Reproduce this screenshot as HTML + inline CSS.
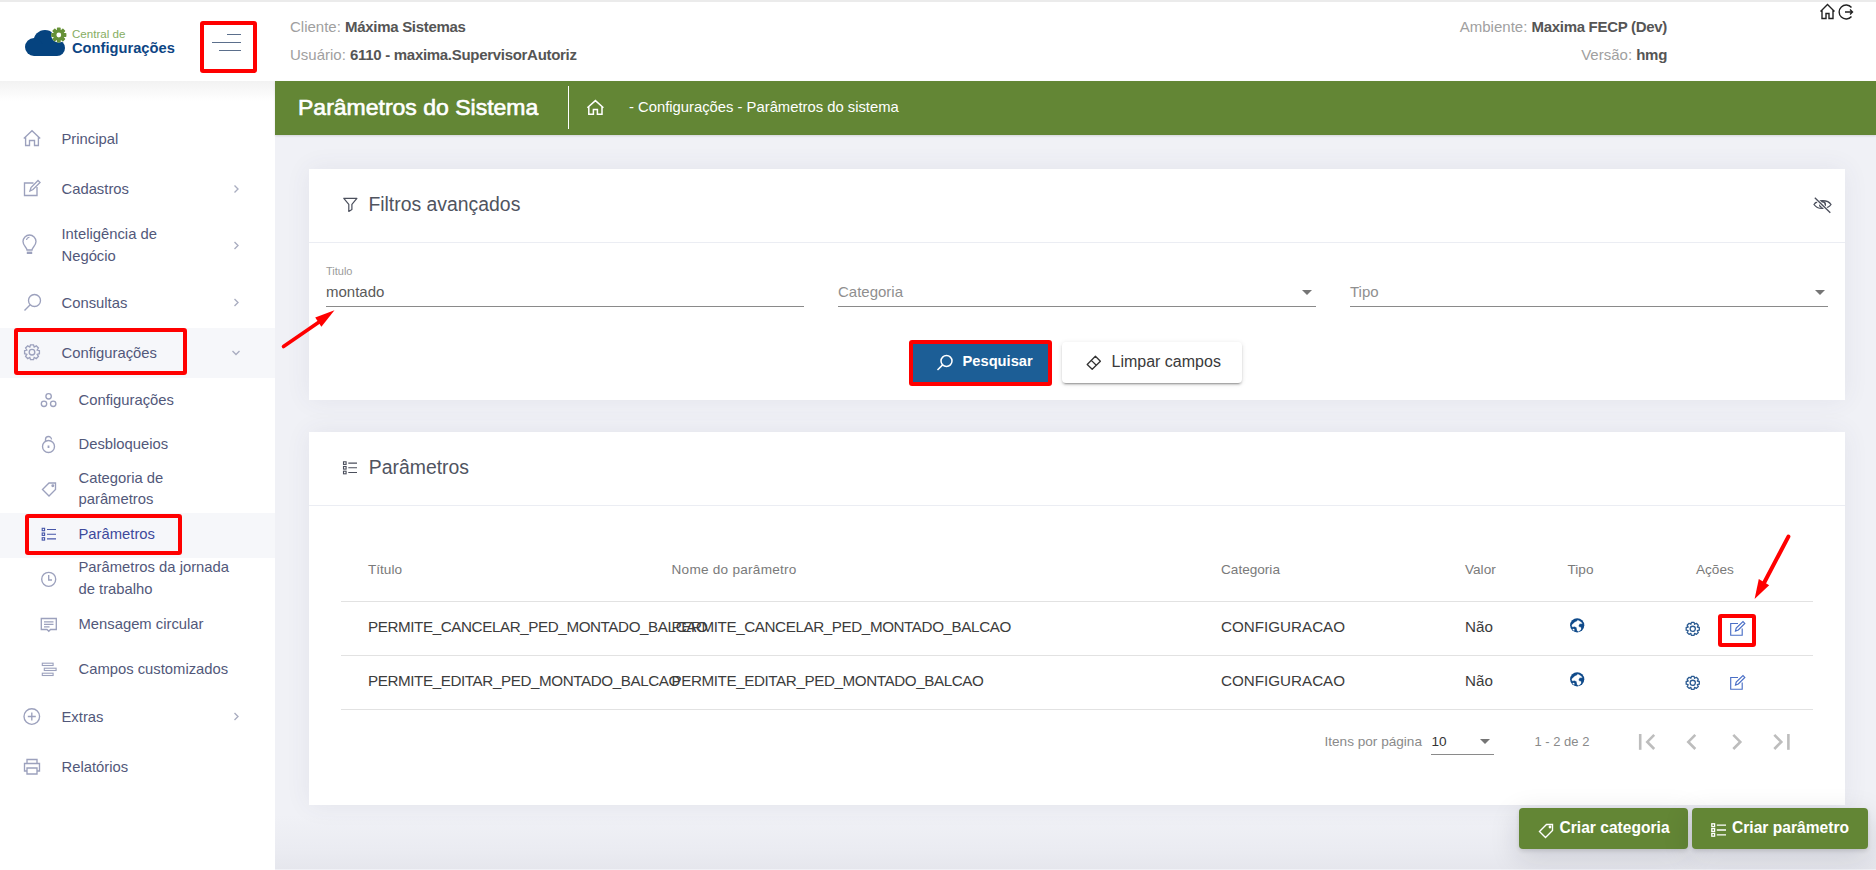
<!DOCTYPE html>
<html><head><meta charset="utf-8">
<style>
*{margin:0;padding:0;box-sizing:border-box}
html,body{width:1876px;height:870px;overflow:hidden;background:#f0f1f6;font-family:"Liberation Sans",sans-serif}
.a{position:absolute}
.t{position:absolute;white-space:nowrap;line-height:1}
svg{position:absolute;overflow:visible}
#topline{left:0;top:0;width:1876px;height:2px;background:#ebebeb}
#header{left:0;top:2px;width:1876px;height:79px;background:#fff}
#sidebar{left:0;top:81px;width:275px;height:789px;background:#fff}
#sbshadow{left:0;top:81px;width:275px;height:20px;background:linear-gradient(#f2f2f2,rgba(255,255,255,0))}
#green{left:275px;top:81px;width:1601px;height:54px;background:#638635;box-shadow:0 1px 2px rgba(0,0,0,.12)}
.card{position:absolute;background:#fff;box-shadow:0 0 24px 0 rgba(70,72,110,.075)}
.redbox{position:absolute;border:4px solid #ff0000;border-radius:3px}
.hl{color:#a0a0a0}
.hv{color:#555;font-weight:bold;letter-spacing:-.3px}
.sb{color:#52587a;font-size:14.8px;margin-top:.8px}
.si{stroke:#9ca1bd;fill:none;stroke-width:1.35}
</style></head><body>
<div id="topline" class="a"></div>
<div id="header" class="a"></div>
<div id="sidebar" class="a"></div>
<div id="sbshadow" class="a"></div>
<div id="green" class="a"></div>
<div class="a" style="left:275px;top:815px;width:1601px;height:54px;background:linear-gradient(rgba(228,229,236,0),rgba(228,229,236,.45) 65%,rgba(226,227,234,.75))"></div>

<!-- header content -->
<div class="t" style="left:290px;top:19px;font-size:15px"><span class="hl">Cliente: </span><span class="hv">Máxima Sistemas</span></div>
<div class="t" style="left:290px;top:47px;font-size:15px"><span class="hl">Usuário: </span><span class="hv">6110 - maxima.SupervisorAutoriz</span></div>
<div class="t" style="right:209px;top:19px;font-size:15px;text-align:right"><span class="hl">Ambiente: </span><span class="hv">Maxima FECP (Dev)</span></div>
<div class="t" style="right:209px;top:47px;font-size:15px;text-align:right"><span class="hl">Versão: </span><span class="hv">hmg</span></div>

<div class="redbox" style="left:200px;top:21px;width:57px;height:52px"></div>


<!-- logo -->
<svg style="left:0;top:0" width="200" height="80">
  <g fill="#05437f">
    <circle cx="45" cy="41.5" r="11.5"/>
    <circle cx="34" cy="47" r="9"/>
    <circle cx="57" cy="48" r="8"/>
    <rect x="34" y="44" width="23" height="12"/>
  </g>
  <g transform="translate(58.8,35)">
    <circle r="7.6" fill="#fff"/>
    <g fill="#669137">
      <circle r="5.6"/>
      <rect x="-1.9" y="-7.6" width="3.8" height="15.2" rx=".7"/>
      <rect x="-1.9" y="-7.6" width="3.8" height="15.2" rx=".7" transform="rotate(45)"/>
      <rect x="-1.9" y="-7.6" width="3.8" height="15.2" rx=".7" transform="rotate(90)"/>
      <rect x="-1.9" y="-7.6" width="3.8" height="15.2" rx=".7" transform="rotate(135)"/>
    </g>
    <circle r="2.4" fill="#fff"/>
  </g>
</svg>
<div class="t" style="left:72px;top:28px;font-size:11.6px;color:#86ad62">Central de</div>
<div class="t" style="left:72px;top:40.5px;font-size:14.7px;color:#0d4584;font-weight:bold">Configurações</div>

<!-- hamburger -->
<div class="a" style="left:227px;top:34px;width:14px;height:1.2px;background:#5b6f8c"></div>
<div class="a" style="left:212px;top:42px;width:29px;height:1.2px;background:#5b6f8c"></div>
<div class="a" style="left:219px;top:50px;width:22px;height:1.2px;background:#5b6f8c"></div>

<!-- top right icons -->
<svg style="left:1818px;top:3px" width="40" height="20" fill="none" stroke="#222" stroke-width="1.4">
  <path d="M2.5 8.5 L9.5 1.5 L16.5 8.5 M4 7 V15.5 H8 V10.5 H11 V15.5 H15 V7"/>
  <path d="M33.5 4.5 A7 7 0 1 0 33.5 13.5 M27 9 H34.5 M32 6.5 L34.5 9 L32 11.5"/>
</svg>

<!-- green bar content -->
<div class="t" style="left:298px;top:95.5px;font-size:23px;color:#fff;-webkit-text-stroke:.65px #fff;transform:scaleY(.93);transform-origin:0 19.5px">Parâmetros do Sistema</div>
<div class="a" style="left:568px;top:86px;width:1px;height:43px;background:#fff"></div>
<svg style="left:586px;top:99px" width="20" height="18" fill="none" stroke="#fff" stroke-width="1.5">
  <path d="M1.4 8.8 L9.4 1.6 L17.4 8.8 M2.8 7.6 V15.2 H7.4 V10.6 H11.4 V15.2 H16 V7.6"/>
</svg>
<div class="t" style="left:629px;top:99.8px;font-size:14.8px;color:#fff">- Configurações - Parâmetros do sistema</div>

<!-- sidebar -->
<div class="a" style="left:0;top:328px;width:275px;height:50px;background:#f6f7fa"></div>
<div class="a" style="left:0;top:513px;width:275px;height:45px;background:#f6f7fa"></div>
<div class="t sb" style="left:61.5px;top:131.4px">Principal</div>
<div class="t sb" style="left:61.5px;top:181.4px">Cadastros</div>
<div class="t sb" style="left:61.5px;top:223.7px;line-height:21.9px">Inteligência de<br>Negócio</div>
<div class="t sb" style="left:61.5px;top:295.5px">Consultas</div>
<div class="t sb" style="left:61.5px;top:345.4px">Configurações</div>
<div class="t sb" style="left:78.5px;top:391.8px">Configurações</div>
<div class="t sb" style="left:78.5px;top:436.3px">Desbloqueios</div>
<div class="t sb" style="left:78.5px;top:467.6px;line-height:21px">Categoria de<br>parâmetros</div>
<div class="t sb" style="left:78.5px;top:526.3px;color:#3d4a9c">Parâmetros</div>
<div class="t sb" style="left:78.5px;top:556.7px;line-height:21.9px">Parâmetros da jornada<br>de trabalho</div>
<div class="t sb" style="left:78.5px;top:616.3px">Mensagem circular</div>
<div class="t sb" style="left:78.5px;top:661.5px">Campos customizados</div>
<div class="t sb" style="left:61.5px;top:708.9px">Extras</div>
<div class="t sb" style="left:61.5px;top:759.1px">Relatórios</div>

<svg style="left:0;top:0" width="275" height="800" class="si">
  <!-- chevrons -->
  <g stroke="#a9adc0"><path d="M234.5 185.5 L238 189 L234.5 192.5"/>
  <path d="M234.5 242 L238 245.5 L234.5 249"/>
  <path d="M234.5 299 L238 302.5 L234.5 306"/>
  <path d="M232.5 351 L236 354.5 L239.5 351"/>
  <path d="M234.5 713 L238 716.5 L234.5 720"/></g>
  <!-- principal home -->
  <path d="M23.8 138.5 L32 130.8 L40.2 138.5 M25.6 137 V145.5 H29.5 V140.5 H34.5 V145.5 H38.4 V137"/>
  <!-- cadastros edit -->
  <path d="M33.5 183 H24.5 V195.5 H37 V187"/>
  <path d="M30 191 L31 187.5 L38 180.5 L40 182.5 L33 189.5 Z"/>
  <!-- bulb -->
  <path d="M27 250 C27 247.5 23 246 23 241.5 A6.5 6.5 0 0 1 36 241.5 C36 246 32 247.5 32 250 Z"/>
  <path d="M26.8 252.8 H32.2" stroke-width="2.4"/>
  <path d="M26.5 240 A3.2 3.2 0 0 1 29.5 237.2" stroke-width="1.1"/>
  <!-- search -->
  <circle cx="34.5" cy="300.5" r="6"/>
  <path d="M30.2 304.8 L24.5 310.5"/>
  <!-- gear -->
  <path d="M30.5 344.8 H33.5 L34.2 347 L36.3 345.8 L38.4 347.9 L37.2 350 L39.4 350.7 V353.7 L37.2 354.4 L38.4 356.5 L36.3 358.6 L34.2 357.4 L33.5 359.6 H30.5 L29.8 357.4 L27.7 358.6 L25.6 356.5 L26.8 354.4 L24.6 353.7 V350.7 L26.8 350 L25.6 347.9 L27.7 345.8 L29.8 347 Z"/>
  <circle cx="32" cy="352.2" r="2.8"/>
  <!-- sub configuracoes: three gears -->
  <circle cx="48.6" cy="396.3" r="2.7"/>
  <circle cx="44" cy="403.8" r="2.7"/>
  <circle cx="53.2" cy="403.8" r="2.7"/>
  <!-- desbloqueios lock -->
  <circle cx="48.5" cy="446.5" r="6"/>
  <path d="M45.5 441.5 V439.5 A3 3 0 0 1 51.5 439.5"/>
  <path d="M48.5 445.5 V448" stroke-width="1.8"/>
  <!-- tag -->
  <path d="M42.5 489.5 L49 483 H55.5 V489.5 L49 496 Z"/>
  <circle cx="52.8" cy="485.8" r=".8"/>
  <!-- list (active) -->
  <g stroke="#4656a8" stroke-width="1.1">
  <rect x="42.2" y="528.3" width="2.4" height="2.4"/>
  <rect x="42.2" y="533" width="2.4" height="2.4"/>
  <rect x="42.2" y="537.7" width="2.4" height="2.4"/>
  <path d="M47 529.5 H56 M47 534.2 H56 M47 538.9 H56"/>
  </g>
  <!-- clock -->
  <circle cx="48.7" cy="579.3" r="7"/>
  <path d="M48.7 575 V580 H52"/>
  <!-- mensagem -->
  <path d="M41.3 618.5 H56.3 V629.5 H50.5 L48.8 631.3 L47 629.5 H41.3 Z"/>
  <path d="M44 621.8 H53.5 M44 624.3 H53.5 M44 626.8 H49.5"/>
  <!-- campos customizados -->
  <g stroke-width="1.1">
  <rect x="42.3" y="663.2" width="10.8" height="2.3" />
  <rect x="44.3" y="668.2" width="11.8" height="2.3" />
  <rect x="42.3" y="673.2" width="10.8" height="2.3" />
  </g>
  <!-- extras plus -->
  <circle cx="31.8" cy="716.5" r="7.8"/>
  <path d="M31.8 712.5 V720.5 M27.8 716.5 H35.8"/>
  <!-- printer -->
  <path d="M27 763 V759.5 H37 V763 M27 771 H24.5 V763.5 H39.5 V771 H37 M27 768 H37 V774 H27 Z"/>
</svg>

<!-- card 1 -->
<div class="card" style="left:309px;top:169px;width:1536px;height:231px"></div>
<div class="a" style="left:309px;top:242px;width:1536px;height:1px;background:#ebedf3"></div>
<svg style="left:343px;top:197px" width="16" height="16" fill="none" stroke="#4b4f5c" stroke-width="1.2">
  <path d="M0.8 1.3 H13.9 L8.9 7.3 V12.5 L5.8 14.4 V7.3 Z" stroke-linejoin="round"/>
</svg>
<div class="t" style="left:368.4px;top:195.2px;font-size:19.4px;color:#50545f">Filtros avançados</div>
<svg style="left:1812px;top:196px" width="20" height="20" fill="none" stroke="#4b4f5c" stroke-width="1.3">
  <path d="M2 8.5 C5 4 15.5 3 19 8.5 C16 13 6 14.5 2 8.5 Z"/>
  <circle cx="10.5" cy="8.5" r="2.8" stroke-width="1.5"/>
  <path d="M2.8 1.8 L18.3 16.8" stroke="#fff" stroke-width="3.2"/>
  <path d="M2.8 1.8 L18.3 16.8"/>
</svg>
<div class="t" style="left:326px;top:266.2px;font-size:11px;color:#9b9b9b">Titulo</div>
<div class="t" style="left:326px;top:284.3px;font-size:15px;color:#5a5a5a">montado</div>
<div class="a" style="left:326px;top:306px;width:478px;height:1px;background:#8a8a8a"></div>
<div class="t" style="left:838px;top:284.4px;font-size:15px;color:#8f8f8f">Categoria</div>
<div class="a" style="left:838px;top:306px;width:478px;height:1px;background:#8a8a8a"></div>
<svg style="left:1302px;top:290px" width="10" height="5"><path d="M0 0 H10 L5 5 Z" fill="#757575"/></svg>
<div class="t" style="left:1350px;top:284.4px;font-size:15px;color:#8f8f8f">Tipo</div>
<div class="a" style="left:1350px;top:306px;width:478px;height:1px;background:#8a8a8a"></div>
<svg style="left:1815px;top:290px" width="10" height="5"><path d="M0 0 H10 L5 5 Z" fill="#757575"/></svg>

<!-- buttons -->
<div class="a" style="left:912.5px;top:343.5px;width:135px;height:38px;background:#1c5e96"></div>
<div class="redbox" style="left:908.5px;top:339.5px;width:143px;height:46px"></div>
<svg style="left:936px;top:354px" width="18" height="18" fill="none" stroke="#fff" stroke-width="1.5">
  <circle cx="10.5" cy="7" r="5.5"/>
  <path d="M6.6 10.9 L1.5 16"/>
</svg>
<div class="t" style="left:962.5px;top:354.4px;font-size:14.7px;color:#fff;font-weight:bold">Pesquisar</div>

<div class="a" style="left:1062px;top:342px;width:180px;height:41px;background:#fff;border-radius:4px;box-shadow:0 3px 1px -2px rgba(0,0,0,.2),0 2px 2px 0 rgba(0,0,0,.14),0 1px 5px 0 rgba(0,0,0,.12)"></div>
<svg style="left:1086px;top:355px" width="16" height="16" fill="none" stroke="#333" stroke-width="1.3">
  <path d="M9.4 1.3 L14.4 6.3 L6.2 14.3 L1.2 9.5 Z M5.3 5.4 L10.3 10.3" stroke-linejoin="round"/>
</svg>
<div class="t" style="left:1111.5px;top:354.3px;font-size:16px;color:#3a3a3a">Limpar campos</div>

<!-- card 2 -->
<div class="card" style="left:309px;top:432px;width:1536px;height:373px"></div>
<div class="a" style="left:309px;top:505px;width:1536px;height:1px;background:#ebedf3"></div>
<svg style="left:342px;top:460px" width="17" height="16" fill="none" stroke="#4b4f5c" stroke-width="1.1">
  <rect x="1.5" y="1.8" width="2.6" height="2.6"/>
  <rect x="1.5" y="6.5" width="2.6" height="2.6"/>
  <rect x="1.5" y="11.2" width="2.6" height="2.6"/>
  <path d="M6.3 3.1 H15 M6.3 7.8 H15 M6.3 12.5 H15"/>
</svg>
<div class="t" style="left:368.8px;top:457.9px;font-size:19.4px;color:#50545f">Parâmetros</div>

<div class="t" style="left:368px;top:563px;font-size:13.6px;color:#7a7a7a">Título</div>
<div class="t" style="left:671.5px;top:563px;font-size:13.6px;color:#7a7a7a;letter-spacing:.25px">Nome do parâmetro</div>
<div class="t" style="left:1221px;top:563px;font-size:13.6px;color:#7a7a7a">Categoria</div>
<div class="t" style="left:1465px;top:563px;font-size:13.6px;color:#7a7a7a">Valor</div>
<div class="t" style="left:1567.5px;top:563px;font-size:13.6px;color:#7a7a7a">Tipo</div>
<div class="t" style="left:1696px;top:563px;font-size:13.6px;color:#7a7a7a">Ações</div>
<div class="a" style="left:341px;top:601px;width:1472px;height:1px;background:#e2e2e2"></div>
<div class="a" style="left:341px;top:655px;width:1472px;height:1px;background:#e2e2e2"></div>
<div class="a" style="left:341px;top:709px;width:1472px;height:1px;background:#e2e2e2"></div>

<div class="t" style="left:368px;top:619.3px;font-size:15.2px;color:#3c3c3c;letter-spacing:-.4px">PERMITE_CANCELAR_PED_MONTADO_BALCAO</div>
<div class="t" style="left:671.5px;top:619.3px;font-size:15.2px;color:#3c3c3c;letter-spacing:-.4px">PERMITE_CANCELAR_PED_MONTADO_BALCAO</div>
<div class="t" style="left:1221px;top:619.3px;font-size:15.2px;color:#3c3c3c">CONFIGURACAO</div>
<div class="t" style="left:1465px;top:619.3px;font-size:15.2px;color:#3c3c3c">Não</div>
<div class="t" style="left:368px;top:673.2px;font-size:15.2px;color:#3c3c3c;letter-spacing:-.4px">PERMITE_EDITAR_PED_MONTADO_BALCAO</div>
<div class="t" style="left:671.5px;top:673.2px;font-size:15.2px;color:#3c3c3c;letter-spacing:-.4px">PERMITE_EDITAR_PED_MONTADO_BALCAO</div>
<div class="t" style="left:1221px;top:673.2px;font-size:15.2px;color:#3c3c3c">CONFIGURACAO</div>
<div class="t" style="left:1465px;top:673.2px;font-size:15.2px;color:#3c3c3c">Não</div>

<!-- globes -->
<svg style="left:1569.5px;top:618.3px" width="15" height="15">
  <circle cx="7.2" cy="7.3" r="7.1" fill="#0f4a8a"/>
  <path d="M1.8 7 L4.8 4.2 L6.5 3.4 L7.8 2.2 L9.4 3 L11.4 4.4 L12.2 5.6 L9.6 5.8 L8.6 7.4 L9 8.9 L11 9.4 L11 11.4 L8.8 13.4 L7.2 12.8 L6.6 9.6 L4.6 8.4 L2.4 9 Z" fill="#fff" stroke="#fff" stroke-width=".3" stroke-linejoin="round"/>
  <ellipse cx="3.6" cy="11.6" rx="1.1" ry=".8" fill="#fff" transform="rotate(35 3.6 11.6)"/>
</svg>
<svg style="left:1569.5px;top:672.3px" width="15" height="15">
  <circle cx="7.2" cy="7.3" r="7.1" fill="#0f4a8a"/>
  <path d="M1.8 7 L4.8 4.2 L6.5 3.4 L7.8 2.2 L9.4 3 L11.4 4.4 L12.2 5.6 L9.6 5.8 L8.6 7.4 L9 8.9 L11 9.4 L11 11.4 L8.8 13.4 L7.2 12.8 L6.6 9.6 L4.6 8.4 L2.4 9 Z" fill="#fff" stroke="#fff" stroke-width=".3" stroke-linejoin="round"/>
  <ellipse cx="3.6" cy="11.6" rx="1.1" ry=".8" fill="#fff" transform="rotate(35 3.6 11.6)"/>
</svg>

<!-- action icons -->
<svg style="left:1684px;top:621px" width="18" height="18" fill="none" stroke="#2b5b92" stroke-width="1.3">
  <path id="gearp" d="M7.4 1.3 H10.1 L10.6 3.3 L12.4 2.3 L14.3 4.2 L13.3 6 L15.3 6.5 V9.2 L13.3 9.7 L14.3 11.5 L12.4 13.4 L10.6 12.4 L10.1 14.4 H7.4 L6.9 12.4 L5.1 13.4 L3.2 11.5 L4.2 9.7 L2.2 9.2 V6.5 L4.2 6 L3.2 4.2 L5.1 2.3 L6.9 3.3 Z" stroke-linejoin="round"/>
  <circle cx="8.75" cy="7.85" r="2.6"/>
</svg>
<svg style="left:1684px;top:675px" width="18" height="18" fill="none" stroke="#2b5b92" stroke-width="1.3">
  <path d="M7.4 1.3 H10.1 L10.6 3.3 L12.4 2.3 L14.3 4.2 L13.3 6 L15.3 6.5 V9.2 L13.3 9.7 L14.3 11.5 L12.4 13.4 L10.6 12.4 L10.1 14.4 H7.4 L6.9 12.4 L5.1 13.4 L3.2 11.5 L4.2 9.7 L2.2 9.2 V6.5 L4.2 6 L3.2 4.2 L5.1 2.3 L6.9 3.3 Z" stroke-linejoin="round"/>
  <circle cx="8.75" cy="7.85" r="2.6"/>
</svg>
<svg style="left:1729px;top:620px" width="18" height="18" fill="none" stroke="#4a6fc6" stroke-width="1.15">
  <path d="M9 3.5 H1.7 V15.2 H13.2 V8.5"/>
  <path d="M6.5 11 L7.2 8 L14 1.6 L15.8 3.4 L9.3 10 Z"/>
</svg>
<svg style="left:1729px;top:674px" width="18" height="18" fill="none" stroke="#4a6fc6" stroke-width="1.15">
  <path d="M9 3.5 H1.7 V15.2 H13.2 V8.5"/>
  <path d="M6.5 11 L7.2 8 L14 1.6 L15.8 3.4 L9.3 10 Z"/>
</svg>
<div class="redbox" style="left:1717.5px;top:613.5px;width:38px;height:33px"></div>

<!-- pagination -->
<div class="t" style="left:1324.5px;top:734.5px;font-size:13.6px;color:#8a8a8a">Itens por página</div>
<div class="t" style="left:1431.5px;top:734.5px;font-size:13.6px;color:#333">10</div>
<svg style="left:1480px;top:739px" width="10" height="5"><path d="M0 0 H10 L5 5 Z" fill="#757575"/></svg>
<div class="a" style="left:1431px;top:754px;width:63px;height:1px;background:#8a8a8a"></div>
<div class="t" style="left:1534.5px;top:734.5px;font-size:13px;color:#8a8a8a">1 - 2 de 2</div>
<svg style="left:1630px;top:728px" width="170" height="28" fill="none" stroke="#bdbdbd" stroke-width="2.6">
  <path d="M10.2 6 V21.8"/>
  <path d="M24.2 6.8 L17.3 13.9 L24.2 21"/>
  <path d="M65.3 6.8 L58.3 13.9 L65.3 21"/>
  <path d="M103.3 6.8 L110.3 13.9 L103.3 21"/>
  <path d="M144.3 6.8 L151.3 13.9 L144.3 21"/>
  <path d="M158.4 6 V21.8"/>
</svg>

<!-- bottom buttons -->
<div class="a" style="left:1519px;top:808px;width:169px;height:41px;background:#638635;border-radius:4px;box-shadow:0 2px 4px rgba(0,0,0,.12),0 8px 28px 2px rgba(20,20,40,.13)"></div>
<div class="a" style="left:1692px;top:808px;width:176px;height:41px;background:#638635;border-radius:4px;box-shadow:0 2px 4px rgba(0,0,0,.12),0 8px 28px 2px rgba(20,20,40,.13)"></div>
<svg style="left:1538px;top:822px" width="17" height="17" fill="none" stroke="#fff" stroke-width="1.4">
  <path d="M1.5 9.5 L8.5 2.5 H14.5 V8.5 L7.5 15.5 Z"/>
  <circle cx="12" cy="5" r=".7"/>
</svg>
<div class="t" style="left:1559.5px;top:819.6px;font-size:15.6px;color:#fff;font-weight:bold">Criar categoria</div>
<svg style="left:1710px;top:822px" width="17" height="17" fill="none" stroke="#fff" stroke-width="1.3">
  <rect x="1.8" y="1.8" width="2.8" height="2.8"/>
  <rect x="1.8" y="6.6" width="2.8" height="2.8"/>
  <rect x="1.8" y="11.4" width="2.8" height="2.8"/>
  <path d="M6.8 3.2 H16 M6.8 8 H16 M6.8 12.8 H16"/>
</svg>
<div class="t" style="left:1732px;top:819.6px;font-size:15.6px;color:#fff;font-weight:bold">Criar parâmetro</div>

<!-- red arrows -->
<svg style="left:0;top:0" width="1876" height="870">
  <path d="M283.5 346.5 L322 320" stroke="#ff0000" stroke-width="3.6" stroke-linecap="round"/>
  <path d="M334.5 310.3 L315.2 317.6 L321.4 326.8 Z" fill="#ff0000"/>
  <path d="M1788.4 536.6 L1764 583" stroke="#ff0000" stroke-width="4" stroke-linecap="round"/>
  <path d="M1754.6 599 L1758.8 579 L1769.2 585.2 Z" fill="#ff0000"/>
</svg>
<div class="redbox" style="left:13.7px;top:328.3px;width:173.3px;height:47px"></div>
<div class="redbox" style="left:24.8px;top:513.9px;width:157.2px;height:41px"></div>
</body></html>
